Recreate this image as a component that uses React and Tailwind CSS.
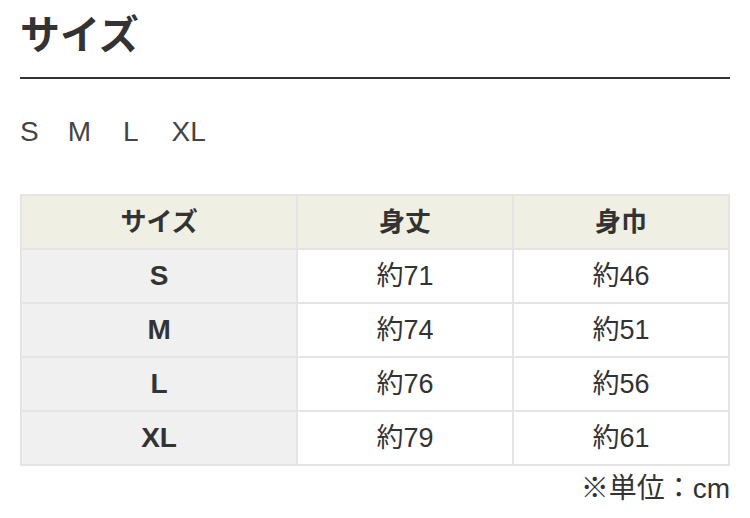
const ROWS = [
  { size: 'S', length: '約71', width: '約46' },
  { size: 'M', length: '約74', width: '約51' },
  { size: 'L', length: '約76', width: '約56' },
  { size: 'XL', length: '約79', width: '約61' },
]

const FONT = { fontFamily: '"Liberation Sans", "Noto Sans CJK JP", sans-serif' }

export default function App() {
  return (
    <div className="min-h-[518px] bg-white px-5 pt-[12px] text-[#333]" style={FONT}>
      {/* Title */}
      <h2 className="text-[40px] font-bold leading-[46px] text-[#333]">サイズ</h2>
      <div className="mt-[19px] h-[2px] bg-[#333]" />

      {/* Size list */}
      <div className="mt-[37px] flex text-[28px] leading-[32px] text-[#444]">
        <span>S</span>
        <span className="ml-[29px]">M</span>
        <span className="ml-[32px]">L</span>
        <span className="ml-[33px]">XL</span>
      </div>

      {/* Table */}
      <table className="mt-[46px] w-full table-fixed border-collapse text-[27px] text-[#333]">
        <colgroup>
          <col className="w-[39%]" />
          <col className="w-[30.5%]" />
          <col className="w-[30.5%]" />
        </colgroup>
        <thead>
          <tr className="bg-[#efefe3]">
            {['サイズ', '身丈', '身巾'].map((h) => (
              <th key={h} className="h-[54px] border-2 border-[#e4e4e4] p-0 text-center text-[26px] font-bold">
                {h}
              </th>
            ))}
          </tr>
        </thead>
        <tbody>
          {ROWS.map((r) => (
            <tr key={r.size}>
              <td className="h-[54px] border-2 border-[#e4e4e4] bg-[#f0f0f0] p-0 text-center text-[28px] font-bold">
                {r.size}
              </td>
              <td className="h-[54px] border-2 border-[#e4e4e4] p-0 text-center">{r.length}</td>
              <td className="h-[54px] border-2 border-[#e4e4e4] p-0 text-center">{r.width}</td>
            </tr>
          ))}
        </tbody>
      </table>

      <p className="mt-[6px] text-right text-[28px] leading-[34px] text-[#333]">※単位：cm</p>
    </div>
  )
}
